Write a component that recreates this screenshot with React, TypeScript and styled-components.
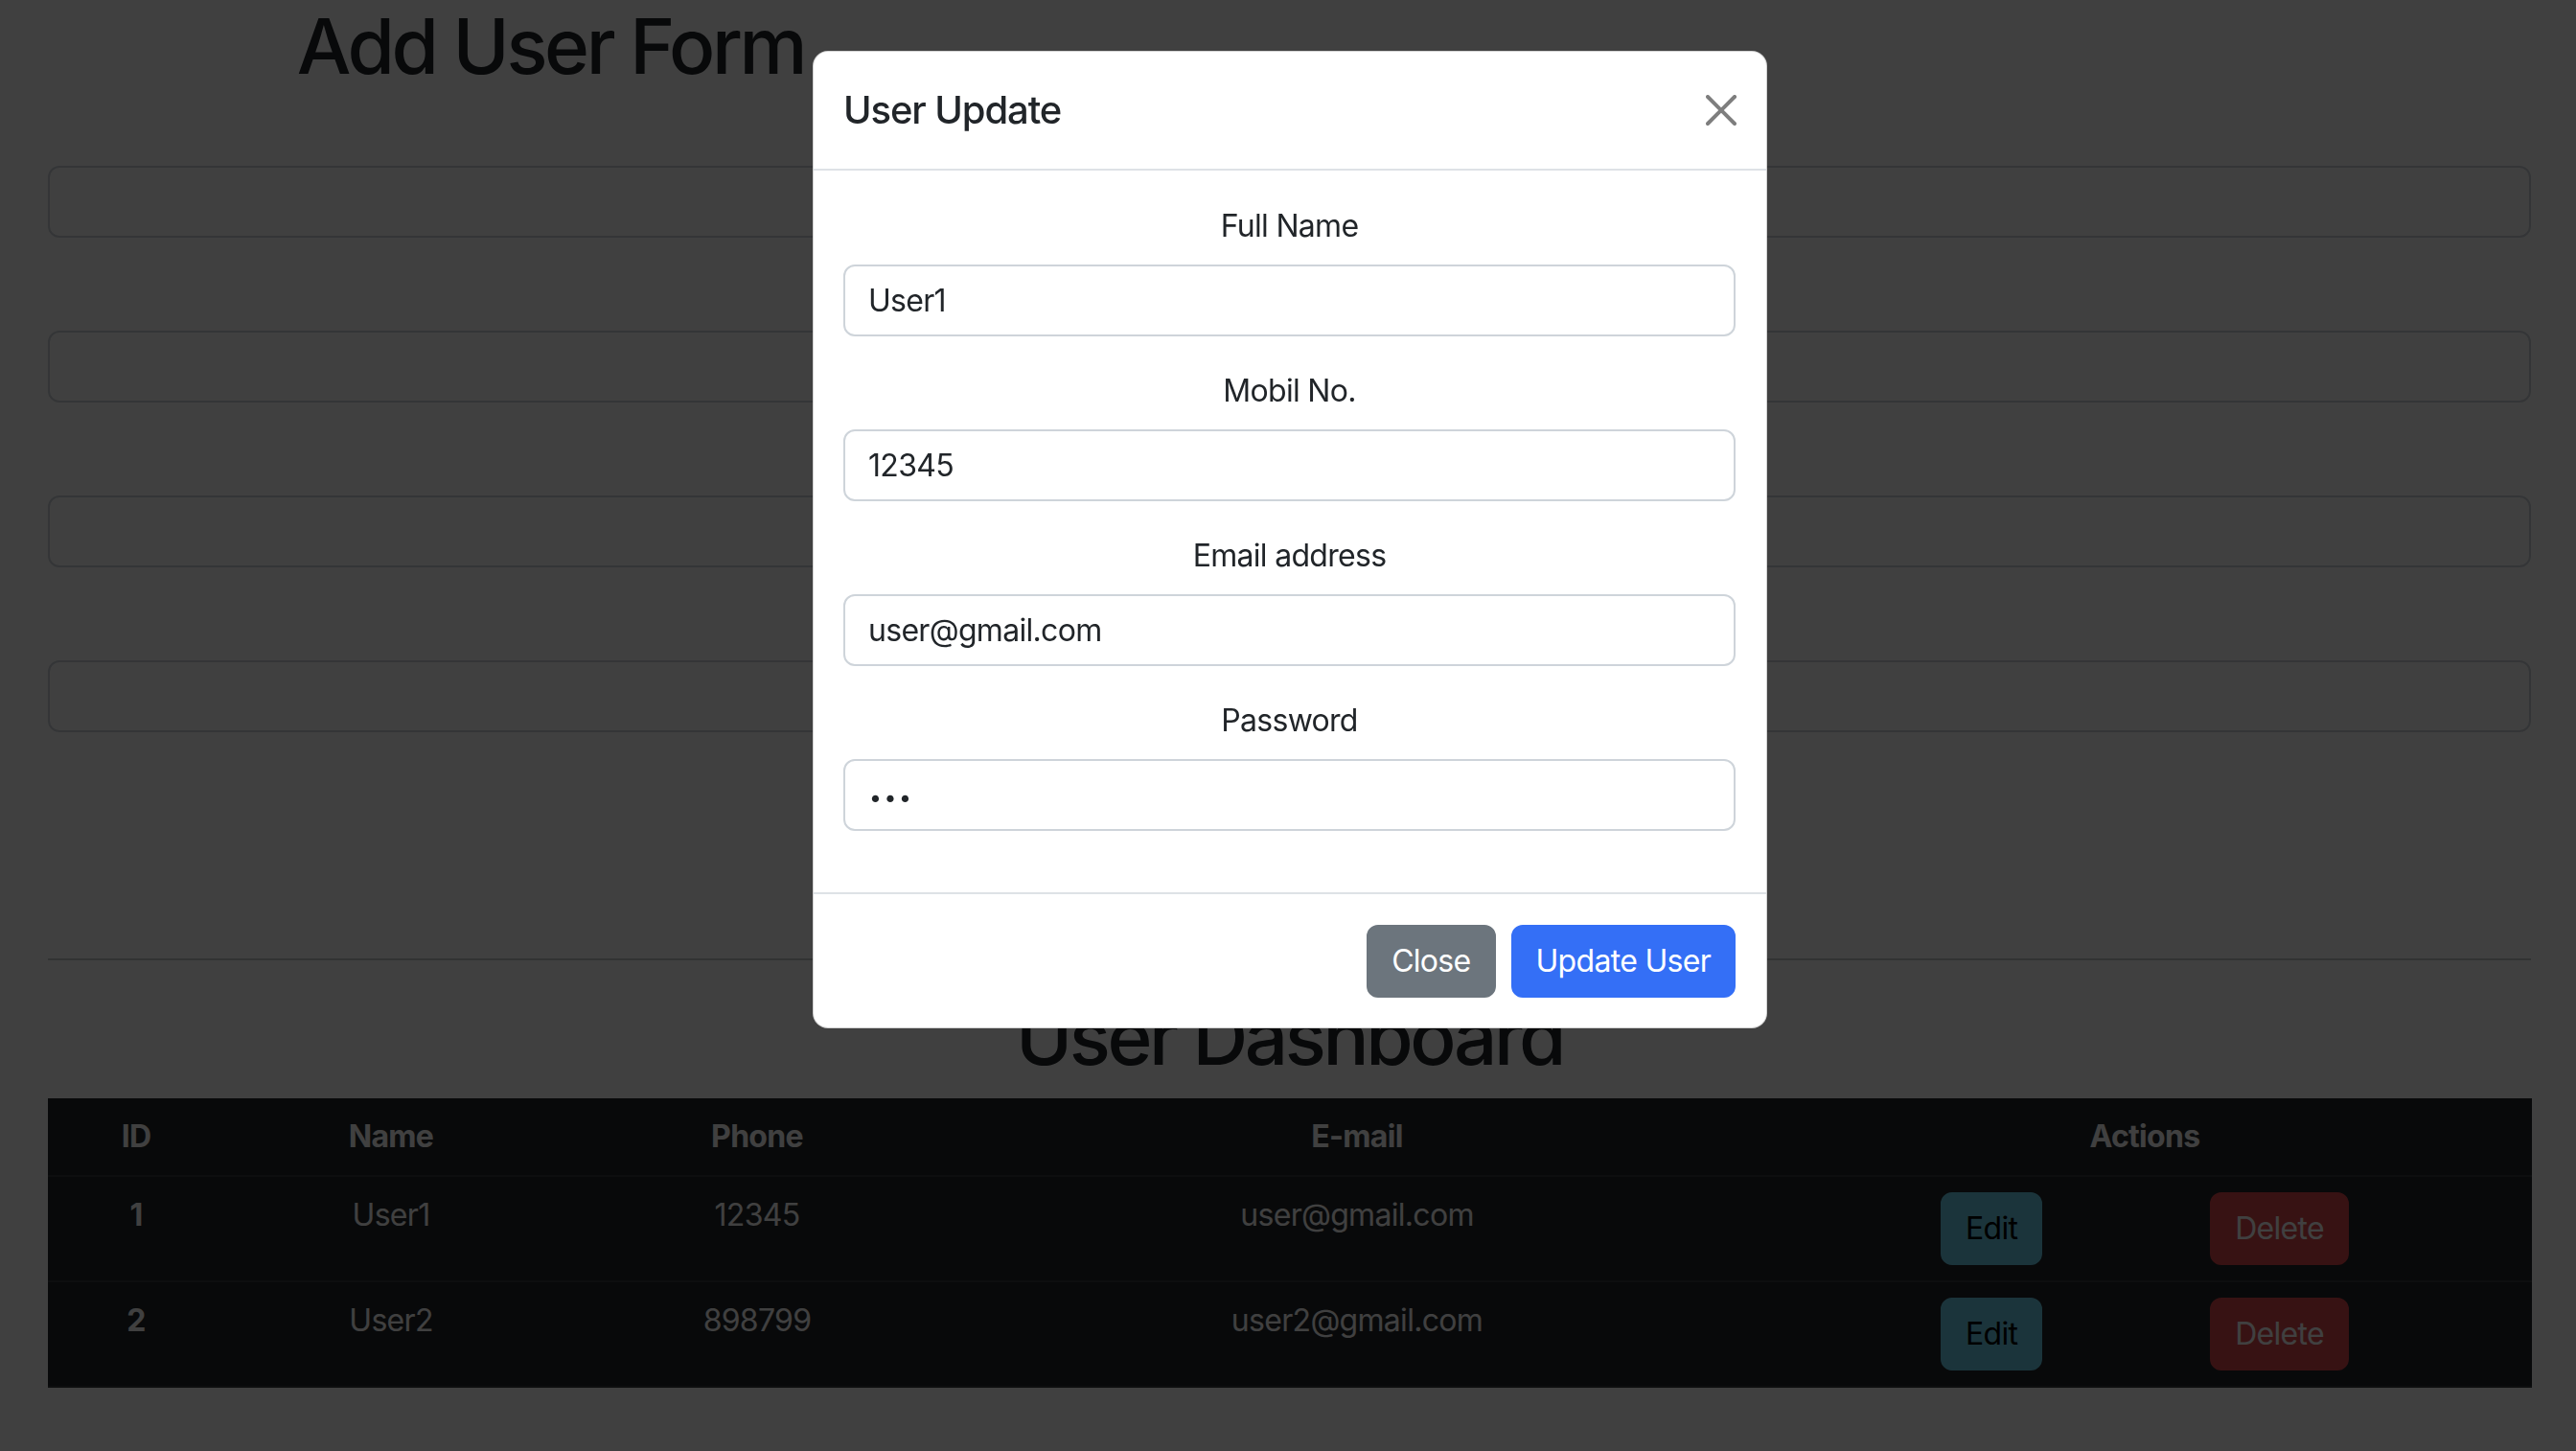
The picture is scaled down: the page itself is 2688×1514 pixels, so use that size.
import React from "react";
import styled, { createGlobalStyle } from "styled-components";

const GlobalStyle = createGlobalStyle`
  html, body { margin: 0; padding: 0; }
  body {
    background: #ffffff;
    font-family: Inter, "Noto Sans", "Liberation Sans", sans-serif;
    font-size: 32px;
    line-height: 1.5;
    letter-spacing: -0.7px;
    color: #212529;
    overflow: hidden;
  }
  *, *::before, *::after { box-sizing: border-box; }
`;

const Page = styled.main`
  padding: 0 47px 0 50px;
  height: 1514px;
`;

const PageTitle = styled.h1<{ $width?: number; $mb: number }>`
  margin: 0 0 ${(p) => p.$mb}px;
  width: ${(p) => (p.$width ? `${p.$width}px` : "auto")};
  font-size: 80px;
  font-weight: 500;
  line-height: 96px;
  letter-spacing: -3.4px;
  text-align: center;
  color: #212529;
`;

const FormGroup = styled.div`
  margin-bottom: 33px;
`;

const FieldLabel = styled.label`
  display: block;
  margin-bottom: 16px;
  line-height: 48px;
  text-align: center;
  color: #212529;
`;

const TextInput = styled.input`
  display: block;
  width: 100%;
  height: 75px;
  padding: 0 24px;
  font-family: inherit;
  font-size: 32px;
  letter-spacing: -0.7px;
  color: #212529;
  background: #ffffff;
  border: 2px solid #ced4da;
  border-radius: 12px;
  outline: none;

  &[type="password"] {
    font-size: 23px;
    letter-spacing: 2.5px;
    padding-top: 5px;
    padding-left: 25px;
  }
`;

const Divider = styled.hr`
  margin: 236px 0 32px;
  border: 0;
  border-top: 2px solid #c8c9ca;
`;

const Table = styled.table`
  width: 100%;
  table-layout: fixed;
  border-collapse: collapse;
  background: #212529;
  color: #ffffff;
  text-align: center;
`;

const HeadCell = styled.th`
  padding: 16px;
  font-weight: 700;
  line-height: 48px;
  vertical-align: top;
  border-bottom: 2px solid #373b3e;
`;

const Cell = styled.td<{ $bold?: boolean }>`
  padding: 16px;
  font-weight: ${(p) => (p.$bold ? 700 : 400)};
  line-height: 48px;
  vertical-align: top;
  border-bottom: 2px solid #373b3e;
`;

const ActionGroup = styled.div`
  display: flex;
  justify-content: space-evenly;
`;

const variants = {
  info: { bg: "#6cd0ec", fg: "#000000" },
  danger: { bg: "#dc484c", fg: "#ffffff" },
  secondary: { bg: "#6c757d", fg: "#ffffff" },
  primary: { bg: "#346ff6", fg: "#ffffff" },
};

const Button = styled.button<{ $variant: keyof typeof variants }>`
  height: 76px;
  padding: 0 24px;
  font-family: inherit;
  font-size: 32px;
  font-weight: 400;
  line-height: 48px;
  letter-spacing: -0.7px;
  color: ${(p) => variants[p.$variant].fg};
  background: ${(p) => variants[p.$variant].bg};
  border: 2px solid ${(p) => variants[p.$variant].bg};
  border-radius: 12px;
  cursor: pointer;
`;

const Backdrop = styled.div`
  position: fixed;
  inset: 0;
  z-index: 10;
  background: rgba(0, 0, 0, 0.75);
`;

const ModalLayer = styled.div`
  position: fixed;
  inset: 0;
  z-index: 20;
  display: flex;
  justify-content: center;
  align-items: flex-start;
  padding: 53px 0 0 4px;
`;

const ModalContent = styled.section`
  width: 996px;
  background: #ffffff;
  border: 1px solid rgba(0, 0, 0, 0.175);
  border-radius: 16px;
`;

const ModalHeader = styled.header`
  display: flex;
  align-items: center;
  justify-content: space-between;
  padding: 31px 31px 31px 31px;
  border-bottom: 2px solid #dee2e6;
`;

const ModalTitle = styled.h5`
  margin: 0;
  font-size: 40px;
  font-weight: 500;
  line-height: 60px;
  letter-spacing: -1.1px;
  color: #212529;
`;

const CloseX = styled.button`
  display: flex;
  width: 32px;
  height: 32px;
  padding: 0;
  border: 0;
  background: transparent;
  opacity: 0.5;
  cursor: pointer;
`;

const ModalBody = styled.div`
  padding: 34px 32px 31px 31px;
`;

const ModalFooter = styled.footer`
  display: flex;
  justify-content: flex-end;
  gap: 16px;
  padding: 32px 32px 31px;
  border-top: 2px solid #dee2e6;
`;

const fields = [
  { label: "Full Name", type: "text", value: "User1" },
  { label: "Mobil No.", type: "text", value: "12345" },
  { label: "Email address", type: "email", value: "user@gmail.com" },
  { label: "Password", type: "password", value: "123" },
];

const users = [
  { id: 1, name: "User1", phone: "12345", email: "user@gmail.com" },
  { id: 2, name: "User2", phone: "898799", email: "user2@gmail.com" },
];

const colWidths = [184, 348, 416, 836, 808];

export default function App() {
  return (
    <>
      <GlobalStyle />
      <Page>
        <PageTitle $width={1049} $mb={13}>
          Add User Form
        </PageTitle>
        <form>
          {fields.map((f) => (
            <FormGroup key={f.label}>
              <FieldLabel>{f.label}</FieldLabel>
              <TextInput type={f.type} defaultValue="" />
            </FormGroup>
          ))}
        </form>
        <Divider />
        <PageTitle $mb={16}>User Dashboard</PageTitle>
        <Table>
          <colgroup>
            {colWidths.map((w, i) => (
              <col key={i} style={{ width: w }} />
            ))}
          </colgroup>
          <thead>
            <tr>
              <HeadCell>ID</HeadCell>
              <HeadCell>Name</HeadCell>
              <HeadCell>Phone</HeadCell>
              <HeadCell>E-mail</HeadCell>
              <HeadCell>Actions</HeadCell>
            </tr>
          </thead>
          <tbody>
            {users.map((u) => (
              <tr key={u.id}>
                <Cell $bold>{u.id}</Cell>
                <Cell>{u.name}</Cell>
                <Cell>{u.phone}</Cell>
                <Cell>{u.email}</Cell>
                <Cell>
                  <ActionGroup>
                    <Button $variant="info">Edit</Button>
                    <Button $variant="danger">Delete</Button>
                  </ActionGroup>
                </Cell>
              </tr>
            ))}
          </tbody>
        </Table>
      </Page>
      <Backdrop />
      <ModalLayer>
        <ModalContent>
          <ModalHeader>
            <ModalTitle>User Update</ModalTitle>
            <CloseX aria-label="Close">
              <svg width="32" height="32" viewBox="0 0 16 16" fill="#000">
                <path d="M.293.293a1 1 0 0 1 1.414 0L8 6.586 14.293.293a1 1 0 1 1 1.414 1.414L9.414 8l6.293 6.293a1 1 0 0 1-1.414 1.414L8 9.414l-6.293 6.293a1 1 0 0 1-1.414-1.414L6.586 8 .293 1.707a1 1 0 0 1 0-1.414z" />
              </svg>
            </CloseX>
          </ModalHeader>
          <ModalBody>
            {fields.map((f) => (
              <FormGroup key={f.label}>
                <FieldLabel>{f.label}</FieldLabel>
                <TextInput type={f.type} defaultValue={f.value} />
              </FormGroup>
            ))}
          </ModalBody>
          <ModalFooter>
            <Button $variant="secondary">Close</Button>
            <Button $variant="primary">Update User</Button>
          </ModalFooter>
        </ModalContent>
      </ModalLayer>
    </>
  );
}
